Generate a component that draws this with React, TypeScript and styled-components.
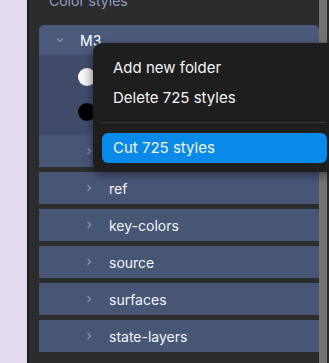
import React from 'react';
import styled, { createGlobalStyle } from 'styled-components';

const GlobalStyle = createGlobalStyle`
  html, body {
    margin: 0;
    padding: 0;
    background: #e2d9ee;
    font-family: Inter, "Noto Sans", "Liberation Sans", sans-serif;
    overflow: hidden;
  }
`;

const Page = styled.div`
  position: relative;
  display: flex;
  width: 329px;
  height: 363px;
  overflow: hidden;
`;

const Backdrop = styled.div`
  flex: 0 0 27px;
  background: #e2d9ee;
`;

const Panel = styled.div`
  flex: 1;
  display: flex;
  background: #2c2c2c;
  border-left: 2px solid #1c1c1c;
`;

// list is scrolled a little, so the section title is partly cut at the top
const Scroller = styled.div`
  flex: 1;
  padding-left: 10px;
  overflow: hidden;
`;

const ScrollBar = styled.div`
  flex: 0 0 8px;
  background: #747474;
  margin-right: 2px;
`;

const SectionTitle = styled.div`
  margin-top: -9px;
  height: 20px;
  line-height: 20px;
  font-size: 14px;
  color: #8a9cc4;
  padding-left: 10px;
`;

const Group = styled.div`
  margin-top: 14px;
  border-radius: 5px 5px 0 0;
  overflow: hidden;
`;

const GroupHeader = styled.div`
  display: flex;
  align-items: center;
  height: 30px;
  background: #4b5a7b;
  color: #fff;
  font-size: 14px;
  padding-left: 17px;
  gap: 16px;
`;

const GroupBody = styled.div`
  display: flex;
  flex-direction: column;
  gap: 17px;
  padding: 13px 0 14px 39px;
  background: #3f4b69;
`;

const Swatch = styled.div<{ $color: string }>`
  width: 18px;
  height: 18px;
  border-radius: 50%;
  background: ${(p) => p.$color};
`;

const Rows = styled.div`
  display: flex;
  flex-direction: column;
  gap: 5px;
`;

const Row = styled.div`
  display: flex;
  align-items: center;
  height: 32px;
  background: #485676;
  color: #f2f4f8;
  font-size: 14px;
  padding-left: 47px;
  gap: 17px;
`;

const Chevron = styled.svg`
  flex: 0 0 auto;
`;

const Menu = styled.div`
  position: absolute;
  left: 93px;
  top: 43px;
  width: 243px;
  box-sizing: border-box;
  padding: 10px 9px 9px;
  background: #1e1e1e;
  border-radius: 9px;
  box-shadow: 0 3px 10px rgba(0, 0, 0, 0.45);
`;

const MenuItem = styled.div<{ $active?: boolean }>`
  height: 30px;
  line-height: 30px;
  padding-left: 11px;
  border-radius: 6px;
  font-size: 15px;
  color: #f4f4f4;
  background: ${(p) => (p.$active ? '#0a8ae8' : 'transparent')};
`;

const Separator = styled.div`
  height: 1px;
  background: #3b3b3b;
  margin: 9px 0 10px;
`;

const ChevronDown = () => (
  <Chevron width="8" height="6" viewBox="0 0 8 6">
    <path d="M1 1.5 L4 4.5 L7 1.5" fill="none" stroke="#8794b0" strokeWidth="1.2" />
  </Chevron>
);

const ChevronRight = () => (
  <Chevron width="6" height="8" viewBox="0 0 6 8">
    <path d="M1.5 1 L4.5 4 L1.5 7" fill="none" stroke="#8794b0" strokeWidth="1.2" />
  </Chevron>
);

const folders = ['', 'ref', 'key-colors', 'source', 'surfaces', 'state-layers'];

const App = () => (
  <Page>
    <GlobalStyle />
    <Backdrop />
    <Panel>
      <Scroller>
        <SectionTitle>Color styles</SectionTitle>
        <Group>
          <GroupHeader>
            <ChevronDown />
            M3
          </GroupHeader>
          <GroupBody>
            <Swatch $color="linear-gradient(90deg, #ffffff, #d9d9d9)" />
            <Swatch $color="#000" />
          </GroupBody>
        </Group>
        <Rows>
          {folders.map((name, i) => (
            <Row key={i}>
              <ChevronRight />
              {name}
            </Row>
          ))}
        </Rows>
      </Scroller>
      <ScrollBar />
    </Panel>
    <Menu>
      <MenuItem>Add new folder</MenuItem>
      <MenuItem>Delete 725 styles</MenuItem>
      <Separator />
      <MenuItem $active>Cut 725 styles</MenuItem>
    </Menu>
  </Page>
);

export default App;
